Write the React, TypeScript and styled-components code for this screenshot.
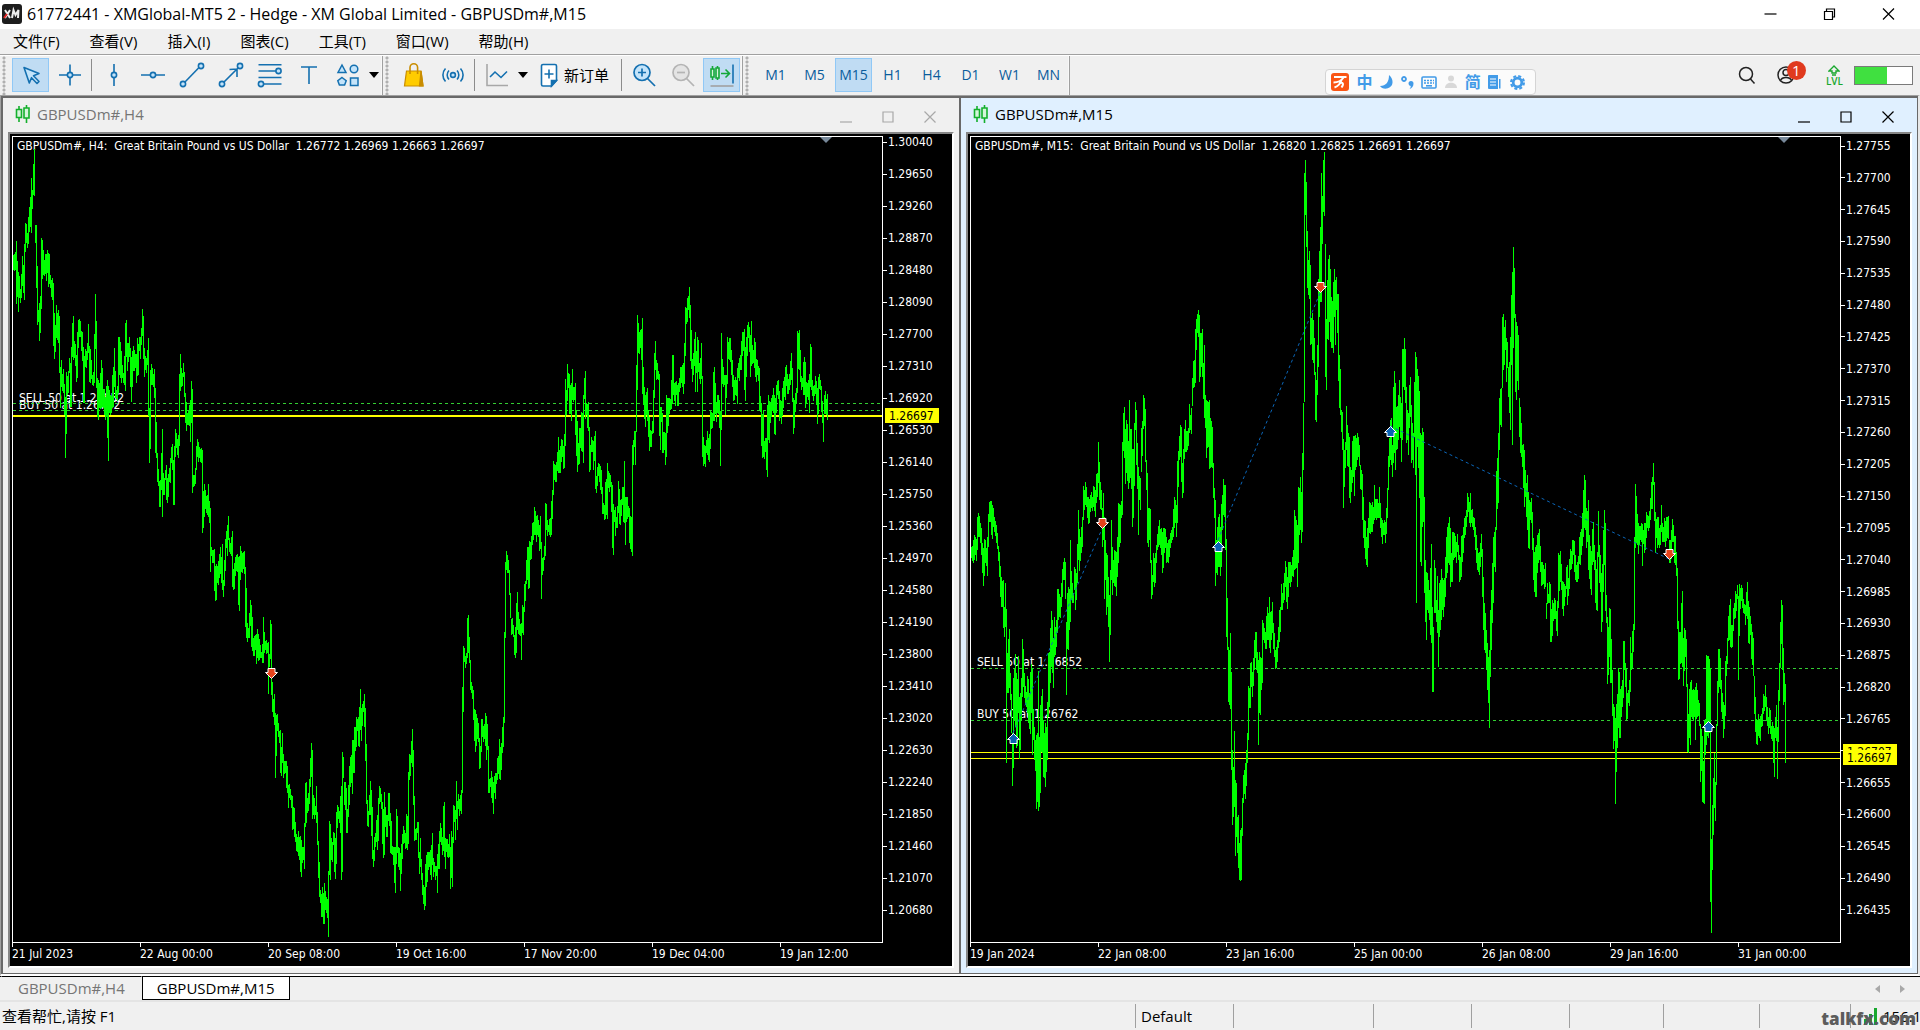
import React from "react";
import styled, { createGlobalStyle, css } from "styled-components";

const UI_FONT = `"Open Sans", "Noto Sans CJK SC", sans-serif`;
const CHART_FONT = `"DejaVu Sans Condensed", "Noto Sans", sans-serif`;

const GlobalStyle = createGlobalStyle`
  *, *::before, *::after { box-sizing: border-box; }
  body { margin: 0; background: #f0f0f0; font-family: ${UI_FONT}; font-size: 15px; color: #000; }
  button { font: inherit; color: inherit; background: none; border: 0; padding: 0; }
  ul, h1, h2 { margin: 0; padding: 0; list-style: none; font-weight: 400; font-size: inherit; }
  svg { display: block; flex: none; }
`;

/* ---------- shell ---------- */

const Shell = styled.div`
  display: flex;
  flex-direction: column;
  height: 100vh;
  min-width: 1200px;
  overflow: hidden;
  position: relative;
`;

const TitleBar = styled.header`
  display: flex;
  align-items: center;
  height: 29px;
  flex: none;
  padding: 0 8px 2px 2px;
  gap: 5px;
  background: #fff;
`;

const Caption = styled.h1`
  flex: 1;
  font-size: 16px;
  line-height: 20px;
`;

const CaptionButtons = styled.div`
  display: flex;
  gap: 12px;
`;

const CaptionButton = styled.button`
  display: grid;
  place-items: center;
  width: 47px;
  height: 24px;
`;

const MenuBar = styled.nav`
  display: flex;
  align-items: center;
  gap: 30px;
  flex: none;
  height: 27px;
  padding: 0 13px 3px;
  border-bottom: 1px solid #fff;
  box-shadow: inset 0 -1px 0 #a0a0a0;

  button { line-height: 22px; }
`;

/* ---------- toolbar ---------- */

const ToolRow = styled.div`
  display: flex;
  align-items: stretch;
  flex: none;
  height: 39px;
`;

const ToolGroup = styled.div<{ $pad?: number }>`
  display: flex;
  align-items: center;
  gap: 2px;
  padding: 0 2px 1px ${(p) => p.$pad ?? 12}px;
  border-right: 1px solid #a0a0a0;
  box-shadow: inset -1px 0 0 #f8f8f8;
  background:
    radial-gradient(circle, #b0b0b0 1px, transparent 2px) 2px 0 / 4px 4px repeat-y;
`;

const activeTool = css`
  background: #c0dcf3;
  border-color: #90c8f6;
`;

const ToolButton = styled.button<{ $active?: boolean; $wide?: boolean }>`
  display: flex;
  align-items: center;
  justify-content: center;
  gap: 6px;
  height: 34px;
  min-width: 37px;
  padding: ${(p) => (p.$wide ? "0 8px" : "0")};
  border: 1px solid transparent;
  line-height: 20px;
  ${(p) => p.$active && activeTool}
`;

const FrameButton = styled(ToolButton)`
  color: #0a5c9c;
  font-size: 14px;
`;

const DropButton = styled.button`
  display: grid;
  place-items: center;
  width: 12px;
  height: 34px;
`;

const Divider = styled.span`
  width: 1px;
  height: 32px;
  margin: 0 1px;
  background: #8c8c8c;
`;

const ToolRight = styled.div`
  display: flex;
  align-items: center;
  margin-left: auto;
  padding: 0 7px 1px 0;
  gap: 11px;
`;

const IconButton = styled.button`
  position: relative;
  display: grid;
  place-items: center;
  width: 28px;
  height: 34px;
`;

const Badge = styled.span`
  position: absolute;
  right: -6px;
  top: 3px;
  width: 19px;
  height: 19px;
  border-radius: 50%;
  background: #e03a1e;
  color: #fff;
  font-size: 15px;
  line-height: 19px;
  text-align: center;
`;

const Level = styled.div`
  display: flex;
  flex-direction: column;
  align-items: center;
  margin-left: 15px;
  color: #19a82e;
  font-size: 10px;
  line-height: 10px;
  font-weight: 600;
`;

const Battery = styled.div`
  width: 59px;
  height: 19px;
  border: 1px solid #7a7a7a;
  background: linear-gradient(90deg, #40e040 56%, #fff 56%);
`;

const ImeBar = styled.div`
  position: absolute;
  right: 384px;
  top: 69px;
  z-index: 3;
  display: flex;
  align-items: center;
  justify-content: space-between;
  width: 211px;
  height: 26px;
  padding: 0 10px 0 5px;
  border: 1px solid #d4d4d4;
  border-radius: 4px;
  background: #fbfbfb;
  color: #429be8;
  font-weight: 700;
  font-size: 16px;
  line-height: 20px;
`;

/* ---------- chart windows ---------- */

const Workspace = styled.main`
  display: flex;
  flex: 1;
  min-height: 0;
  border-top: 1px solid #a0a0a0;
  border-left: 1px solid #a0a0a0;
  border-right: 2px solid #e8e8e8;
  border-bottom: 2px solid #fff;
  padding: 1px 0 0 1px;
  background: #696969;
`;

const WindowFrame = styled.section<{ $active: boolean }>`
  display: flex;
  flex-direction: column;
  flex: 1 1 0;
  min-width: 0;
  border: 1px solid #696969;
  padding: 0 5px 5px;
  background: ${(p) => (p.$active ? "#e0f0ff" : "#f0f0f0")};
  color: ${(p) => (p.$active ? "#000" : "#757575")};
`;

const WindowBar = styled.div`
  display: flex;
  align-items: center;
  gap: 6px;
  flex: none;
  height: 34px;
  padding: 0 7px 2px;

  h2 {
    flex: 1;
    font-size: 15px;
    line-height: 20px;
  }
`;

const WindowButtons = styled.div<{ $active: boolean }>`
  display: flex;
  gap: 18px;
  padding: 5px 5px 0 0;
  color: ${(p) => (p.$active ? "#000" : "#a8a8a8")};

  button {
    display: grid;
    place-items: center;
    width: 24px;
    height: 20px;
  }
`;

const ChartArea = styled.div`
  display: grid;
  grid-template-columns: minmax(0, 1fr) 69px;
  grid-template-rows: minmax(0, 1fr) 23px;
  flex: 1;
  min-height: 0;
  padding: 2px 0 0 2px;
  border: 2px solid;
  border-color: #868686 #fff #fff #868686;
  background: #000;
  color: #fff;
  font-family: ${CHART_FONT};
  font-size: 12px;
  line-height: 12px;
`;

const Plot = styled.div`
  position: relative;
  border: 1px solid #fff;

  svg {
    position: absolute;
    inset: 0;
    width: 100%;
    height: 100%;
  }
`;

const PlotHeader = styled.p`
  margin: 2px 4px;
  line-height: 14px;
  white-space: pre;
`;

const PlotLabel = styled.span`
  position: absolute;
  left: 6px;
  transform: translateY(-100%);
  line-height: 12px;
`;

const LastTag = styled.span`
  position: absolute;
  left: calc(100% + 3px);
  width: 54px;
  height: 15px;
  margin-top: -8px;
  padding-left: 4px;
  background: #ff0;
  color: #000;
  line-height: 16px;
  z-index: 1;
`;

const PriceAxis = styled.ul<{ $inset: number }>`
  display: flex;
  flex-direction: column;
  justify-content: space-between;
  padding: ${(p) => p.$inset}px 0 27px;

  li {
    display: flex;
    align-items: center;
    gap: 1px;
    height: 12px;
  }
  li::before {
    content: "";
    width: 4px;
    height: 1px;
    background: #fff;
  }
`;

const TimeAxis = styled.ul`
  display: flex;

  li {
    position: relative;
    flex: none;
    width: 128px;
    padding-top: 5px;
  }
  li::before {
    content: "";
    position: absolute;
    left: 0;
    top: 0;
    width: 1px;
    height: 4px;
    background: #fff;
  }
`;

/* ---------- bottom ---------- */

const TabStrip = styled.div`
  display: flex;
  flex: none;
  height: 26px;
  border-top: 1px solid #000;
  border-bottom: 2px solid #e4e4e4;
  padding-left: 1px;
`;

const Tab = styled.button<{ $active?: boolean }>`
  height: 24px;
  padding: 0 ${(p) => (p.$active ? 14 : 16)}px;
  margin-top: -1px;
  line-height: 22px;
  color: ${(p) => (p.$active ? "#000" : "#757575")};
  background: ${(p) => (p.$active ? "#fff" : "#f0f0f0")};
  border: 1px solid ${(p) => (p.$active ? "#000" : "transparent")};
  border-top-color: #000;
`;

const TabArrows = styled.div`
  display: flex;
  align-items: center;
  gap: 20px;
  margin-left: auto;
  padding-right: 15px;
`;

const StatusBar = styled.footer`
  display: flex;
  align-items: center;
  flex: none;
  height: 28px;
  line-height: 20px;
`;

const StatusText = styled.span`
  flex: 1;
  padding-left: 2px;
`;

const StatusCell = styled.span<{ $w: number }>`
  display: flex;
  align-items: center;
  gap: 5px;
  width: ${(p) => p.$w}px;
  height: 24px;
  padding-left: 5px;
  border-left: 1px solid #a0a0a0;
  white-space: nowrap;
`;

const Watermark = styled.span`
  position: absolute;
  right: 4px;
  bottom: 0;
  color: #5c5c5c;
  font-family: "Open Sans", sans-serif;
  font-weight: 800;
  font-size: 17px;
  line-height: 22px;
`;

/* ---------- icons ---------- */

const BLUE = "#1470b0";
const SKY = "#c4e4fa";

type IconProps = { children: React.ReactNode; w?: number; h?: number; stroke?: string; sw?: number };

const Icon = ({ children, w = 26, h = 26, stroke = BLUE, sw = 2 }: IconProps) => (
  <svg width={w} height={h} viewBox={`0 0 ${w} ${h}`} fill="none" stroke={stroke} strokeWidth={sw} aria-hidden="true">
    {children}
  </svg>
);

const CursorIcon = () => (
  <Icon sw={1.6}><path d="M6 5.500 21 11.500 15.500 13.700 21 19.500 19 21.500 13.500 15.700 11.300 21Z" fill={SKY} strokeLinejoin="round" /></Icon>
);
const CrossIcon = () => (
  <Icon sw={1.6}><path d="M2 13h8M16 13h8M13 2.500v7.500M13 16v7.500" /><circle cx="13" cy="13" r="2.600" fill={SKY} /></Icon>
);
const VLineIcon = () => (
  <Icon sw={1.6}><path d="M13 2v8M13 16v8" /><circle cx="13" cy="13" r="2.600" fill={SKY} /></Icon>
);
const HLineIcon = () => (
  <Icon sw={1.6}><path d="M1 13h9M16 13h9" /><circle cx="13" cy="13" r="2.600" fill={SKY} /></Icon>
);
const TrendIcon = () => (
  <Icon sw={1.6}><path d="m5 21 16-16.500" /><circle cx="4" cy="22" r="2.600" fill={SKY} /><circle cx="22" cy="4" r="2.600" fill={SKY} /></Icon>
);
const RayIcon = () => (
  <Icon sw={1.6}><path d="m5 21 15-15M11.500 7.500 19 7v8" /><circle cx="4" cy="22" r="2.600" fill={SKY} /><circle cx="22" cy="4" r="2.600" fill={SKY} /></Icon>
);
const FiboIcon = () => (
  <Icon sw={1.6}>
    <path d="M1.500 2.800h23M1.500 9h17.500M1.500 15.500h23M7 22h17.500" />
    <circle cx="21.500" cy="9" r="2.600" fill={SKY} /><circle cx="4" cy="22" r="2.600" fill={SKY} />
  </Icon>
);
const TextIcon = () => (
  <Icon sw={1.6}><path d="M5 5h16M13 5v17" /></Icon>
);
const ShapesIcon = () => (
  <Icon sw={1.5}>
    <path d="M7 3 11 10.500H3Z" fill={SKY} /><circle cx="19" cy="7" r="3.800" fill={SKY} />
    <path d="M7 15.500 11.200 18.700 9.600 23H4.400L2.800 18.700Z" fill={SKY} /><path d="M15.500 16h7.500v7.500h-7.500z" fill={SKY} />
  </Icon>
);
const BagIcon = () => (
  <Icon stroke="#c98d00" sw={1.2}>
    <path d="M5.500 9h14.500l2 15H3.500Z" fill="#fc0" /><path d="M9 12V5.500a3.800 3.800 0 0 1 7.600 0V12" strokeWidth="1.600" /><path d="M20 9 22 24h-3.500Z" fill="#c98d00" />
  </Icon>
);
const SignalIcon = () => (
  <Icon sw={1.6}>
    <circle cx="13" cy="13" r="2.400" fill={SKY} />
    <path d="M9 8.500a6.500 6.500 0 0 0 0 9M17 8.500a6.500 6.500 0 0 1 0 9M5.500 6.500a9.500 9.500 0 0 0 0 13M20.500 6.500a9.500 9.500 0 0 1 0 13" />
  </Icon>
);
const LineChartIcon = () => (
  <Icon sw={1.6}><path d="M3 2v21.500h21" stroke="#a8a8a8" /><path d="m6 15 5-5 6 5.500 6-6" /></Icon>
);
const OrderIcon = () => (
  <Icon w={18} sw={1.6}>
    <path d="M3 2.500h12a1.500 1.500 0 0 1 1.500 1.500v14.500L11.500 24H3A1.500 1.500 0 0 1 1.500 22.500V4A1.500 1.500 0 0 1 3 2.500Z" fill="#fff" />
    <path d="M16.500 18.500h-5V24Z" fill={BLUE} /><path d="M9 7.500v9M4.500 12h9" />
  </Icon>
);
const ZoomInIcon = () => (
  <Icon sw={1.7}><path d="m16.500 16.500 7.500 7.500" /><circle cx="11" cy="10.500" r="8" fill={SKY} /><path d="M11 6.500v8M7 10.500h8" /></Icon>
);
const ZoomOutIcon = () => (
  <Icon stroke="#b4b4b4" sw={1.7}><path d="m16.500 16.500 7.500 7.500" /><circle cx="11" cy="10.500" r="8" fill="#e4e4e4" /><path d="M7 10.500h8" /></Icon>
);
const ShiftIcon = () => (
  <Icon stroke="#14a838" sw={1.6}>
    <path d="M3.500 4v14M8.500 4v14M12 11.500h8M16.500 7.500l4 4-4 4" /><path d="M2 7h3v8H2zM7 6h3v10H7z" fill="#d6f5dc" />
    <path d="M24 2.500v19" stroke={BLUE} /><path d="M1.500 24h23" stroke="#a0a0a0" />
  </Icon>
);
const CandleIcon = () => (
  <Icon w={16} h={18} stroke="#14b02c" sw={1.6}>
    <path d="M4 1v16M11.500 0v18" /><path d="M1.500 4.500h5v8h-5zM9 3h5v10H9z" fill="#d6f5dc" />
  </Icon>
);
const CaretIcon = () => (
  <Icon w={10} h={6} stroke="none"><path d="M0 0h10L5 6Z" fill="#000" /></Icon>
);
const SearchIcon = () => (
  <Icon w={20} h={20} stroke="#222" sw={1.5}><circle cx="9" cy="9" r="6.500" /><path d="m13.500 14 4 4.500" /></Icon>
);
const UserIcon = () => (
  <Icon w={20} h={20} stroke="#222" sw={1.5}>
    <circle cx="10" cy="10" r="8" /><circle cx="10" cy="7.500" r="3" /><path d="M4.500 15.500c1.500-4 9.500-4 11 0" />
  </Icon>
);
const LevelIcon = () => (
  <Icon w={12} h={11} stroke="#19a82e" sw={1.4}><path d="M6 1 11 6H8v2H4V6H1ZM4 10h4" /></Icon>
);

const BrandIcon = () => (
  <svg width="20" height="20" viewBox="0 0 20 20" aria-hidden="true">
    <rect width="20" height="20" rx="3" fill="#1d1d1d" />
    <path d="m3 6 5 8M8 6l-5 8M10 14l1.500-8 2 5 3-5-.5 8" stroke="#eee" strokeWidth="2" fill="none" />
    <path d="m2 14 3-4" stroke="#e02020" strokeWidth="2" />
  </svg>
);

const WinGlyph = ({ kind, size = 12 }: { kind: "min" | "max" | "restore" | "close"; size?: number }) => (
  <svg width={size} height="12" viewBox="0 0 12 12" fill="none" stroke="currentColor" strokeWidth="1.200" aria-hidden="true">
    {kind === "min" && <path d={size > 12 ? "M0 6h12" : "M0 11h12"} />}
    {kind === "max" && <path d="M1 1h10v10H1z" />}
    {kind === "restore" && <path d="M1 3.500h8v8H1zM3 3.500v-2.500h8v8H9" />}
    {kind === "close" && <path d="m.5.500 11 11M11.500.5l-11 11" />}
  </svg>
);

/* ---------- price series ----------
   Every row starts with the column of its first bar, then one high,low pair
   for each following pixel column; all values are in thirds of a pixel. */

type Block = { x: number; y: number; unit?: number; rows: string[] };

const H4_BLOCKS: Block[] = [
  { x: -13, y: -7, rows: [
    "40 375,420 372,422 365,420 333,522 393,500 426,545 438,505 477,518 432,505 378,467 405,490 342,510 279,365 282,340 308,353 261,342 231,306 201,290 144,308 180,237",
    "100 101,195 57,197 285,338 285,475 408,585 540,576 520,632 498,608 323,538 330,446 360,436 390,438 372,432 372,452 360,430 368,470 372,462 436,474 450,502 444,510",
    "160 458,648 548,686 585,665 525,625 548,630 540,638 558,730 711,835 690,770 733,782 717,790 762,855 800,984 726,912 738,795 723,790 684,730 698,830 650,832 579,682",
    "220 558,690 633,685 642,708 675,755 606,745 570,655 567,620 573,620 603,662 606,692 650,820 678,820 657,710 663,715 640,690 582,670 648,755 657,758 690,748 735,765",
    "280 726,768 612,758 492,656 573,773 744,862 750,870 760,835 729,838 690,835 714,830 777,835 777,855 800,870 768,860 750,925 768,992 780,850 795,855 798,850 735,835",
    "340 711,830 654,770 723,805 780,808 768,812 620,790 622,735 636,745 663,760 705,745 730,760 678,765 579,782 570,680 638,722 640,695 620,680 655,770 682,815 662,770",
    "400 648,722 660,722 672,715 672,760 624,738 642,735 620,662 620,686 594,645 537,618 558,686 654,740 678,720 685,728 660,705 624,858 835,998 720,957 702,765 714,765",
    "460 732,772 717,805 775,970 876,985 970,1055 1018,1068 1052,1130 1050,1130 970,1080 897,1160 1030,1095 1045,1095 1020,1050 1005,1110 1045,1118 1032,1100 1015,1055 984,1058 950,1000 942,1020",
    "520 990,1124 948,1124 897,982 909,955 928,975 915,985 732,948 672,782 714,770 728,768 699,740 727,800 790,878 815,902 850,885 844,885 826,888 810,935 753,880 777,1088",
    "580 1034,1070 1034,1068 1015,1062 948,1020 927,980 936,995 950,985 957,995 955,1000 960,1210 1083,1195 1062,1160 1080,1138 1098,1150 1095,1155 1062,1162 1113,1180",
  ] },
  { x: -13, y: 383, rows: [
    "631 -36,156 82,108 90,130 90,128 88,213 138,243 132,240 138,190 122,195 102,175 82,162 110,190 72,210 180,230 120,198 57,153 33,85 15,108 -12,60 54,95",
    "691 70,102 52,108 33,200 147,210 128,208 110,168 105,152 102,155 110,255 108,272 78,180 93,155 100,158 96,146 93,162 140,320 204,354 310,366 324,355 280,354",
    "751 240,318 255,380 291,393 354,408 348,408 345,390 342,432 327,414 342,422 357,420 375,415 395,415 372,428 291,428 336,400 363,390 360,402 368,400 366,522 402,440",
    "811 300,418 312,525 486,576 537,590 522,615 580,774 585,708 582,632 610,650 632,668 630,760 680,768 640,728 702,774 723,762 722,760 723,803 738,820 795,864 792,835",
    "871 807,840 825,864 828,930 862,926 864,950 906,966 942,993 952,996 933,1008 952,1020 948,1055 960,1072 980,1030 980,1020 910,1046 789,922 786,908 834,878 820,874 777,852",
    "931 714,800 669,772 690,897 825,885 834,896 858,884 798,908 876,975 963,1074 1026,1130 1110,1150 1122,1190 1101,1190 1118,1212 1089,1212 1112,1170 1130,1178 1137,1194 1053,1250 903,1065",
    "991 912,1080 954,1020 966,1026 936,975 938,1056 954,1077 876,1032 855,924 861,898 873,908 828,940 798,1080 696,1056 711,775 786,855 786,870 803,940 867,938 795,890 738,855",
    "1051 711,800 705,790 660,822 660,760 621,758 620,692 591,680 597,632 591,678 561,682 507,630 564,663 552,618 543,576 522,622 564,723 672,852 840,918 873,920 825,884",
    "1111 783,885 810,948 861,1018 990,1040 950,1022 938,982 900,966 885,990 834,962 798,852 804,846 822,867 846,972 867,1014 816,1005 861,920 885,950 884,950 819,902 819,918",
    "1171 880,1000 903,1003 978,1005 980,1035 981,1088 980,1118 867,1032 888,1000 982,1040 984,1050 999,1112 972,1062 942,1018 918,972 930,970 938,986 882,984 888,990 756,972 702,780",
    "1231 705,768 663,728 627,740 690,855 828,963 927,960 924,960 906,938 906,1014 996,1062 954,1040 1018,1080 1058,1125 1095,1152 1102,1170 1032,1158 1006,1100 996,1086 996,1050 996,1040",
    "1291 990,1065 975,1080 939,1035 1014,1070 1026,1055 1038,1080 1038,1068 1002,1118 972,1046 933,1046 909,965 924,975 950,1005 858,993 846,1010 954,1046 957,996 957,1012 972,1015 942,1012",
    "1351 980,1106 933,1074 952,1100 855,970 858,906 870,960 783,898 843,930 822,868 837,888 825,872 810,882 501,820 378,576 384,426 408,443 399,432 294,414 285,400 350,430",
    "1411 420,510 486,518 498,538 510,600 567,663 570,696 582,678 594,656 608,667 654,747 678,745 597,696 597,650 618,666 612,656 579,678 588,720 612,690 678,820 777,820",
    "1471 774,800 753,834 771,850 786,882 768,820 759,837 759,792 714,780 708,763 657,777",
  ] },
  { x: 427, y: 143, rows: [
    "181 1400,1500 1390,1470 1340,1420 1310,1400 1055,1330 846,1075 813,870 825,880 840,880 870,945 940,1015 1018,1066 1015,1062 1035,1070 1065,1125 1040,1133 970,1120 936,1050 996,1062 1018,1066",
    "241 1032,1068 1030,1140 975,1060 980,1064 912,995 903,962 840,912 801,900 801,926 783,924 786,840 768,838 729,796 726,780 681,766 694,765 708,786 705,765 720,770 735,812",
    "301 708,808 786,957 834,885 830,872 798,840 669,828 672,750 720,767 735,756 716,765 714,770 663,765 630,716 543,644 552,600 555,605 546,606 516,572 471,578 510,580",
    "361 498,578 477,545 480,530 498,566 462,564 297,498 330,405 252,362 279,324 282,402 315,402 309,423 267,360 321,365 320,360 309,465 390,527 423,575 489,555 444,552",
    "421 443,503 396,512 400,515 345,548 294,356 273,417 369,405 372,444 366,453 441,575 495,570 471,515 480,515 483,570 468,543 453,626 588,638 561,618 549,588 552,606",
    "481 558,630 570,642 620,702 669,702 676,720 606,718 597,705 549,717 573,624 579,635 585,621 606,696 615,804 672,825 690,725 681,768 711,744 678,743 603,700 627,732",
    "541 660,735 657,708 621,675 621,725 543,730 651,795 651,726 651,716 678,711 684,790 708,808 710,816 495,828 480,555 453,500 453,555 255,456 105,330 129,220 156,222",
    "601 150,205 147,240 114,342 261,375 321,417 345,441 336,405 324,423 390,471 410,513 450,500 453,500 423,462 330,460 219,354 183,270 240,300 249,298 273,300 282,468",
    "661 381,510 381,425 399,520 456,520 456,510 459,555 345,530 354,460 354,438 354,402 357,390 300,388 225,372 225,345 309,363 306,378 303,345 315,378 309,377 294,336",
    "721 261,324 261,310 255,320 249,342 189,312 81,228 84,132 54,126 48,90 21,114 75,243 150,267 237,306 219,285 177,258 156,336 213,280 171,336 180,276 249,297",
    "781 234,312 189,298 288,530 471,558 495,552 498,560 480,520 453,525 474,540 462,545 393,507 396,447 399,444 276,423 261,423 309,402 366,426 345,400 345,402 360,444",
    "841 393,558 159,450 237,312 261,320 285,315 285,405 285,354 171,312 186,238 174,240 174,246 210,285 240,321 285,363 300,360 291,345 300,348 264,372 249,294 234,303",
    "901 225,270 183,270 156,228 156,212 147,330 201,363 171,291 135,228 126,175 141,216 165,291 123,258 195,252 210,250 174,264 186,291 237,306 240,285 258,303 264,390",
    "961 348,396 369,498 402,534 390,530 483,537 474,515 474,570 375,591 345,480 363,489 366,430 354,410 345,394 324,400 345,462 354,465 315,400 303,345 300,356 333,423",
    "1021 360,414 363,432 324,408 303,384 291,350 261,360 255,318 282,342 297,342 282,330 243,315 219,300 264,366 354,462 360,444 339,396 324,372 153,340 159,267 150,270",
    "1081 210,306 288,330 294,321 246,345 231,345 246,384 306,372 309,351 300,360 282,399 192,321 201,330 300,348 318,363 315,348 288,342 303,375 324,432 291,402 282,327",
    "1141 300,330 318,396 363,430 402,486 345,402 333,402 357,405 342,420",
  ] },
];

const M15_BLOCKS: Block[] = [
  { x: -11, y: 303, rows: [
    "35 320,355 318,362 300,368 285,360 290,345 297,362 230,330 220,290 228,290 248,310 264,345 310,400 325,437 297,408 300,370 325,378 290,408 222,320 186,245 184,245",
    "95 184,285 195,298 203,262 232,275 243,288 255,308 280,328 318,362 336,410 378,470 410,500 422,502 420,565 500,592 430,560 508,968 640,760 596,758 568,745 700,780",
    "155 762,880 880,1038 714,984 686,840 643,862 700,925 716,918 648,820 770,958 758,930 715,840 598,770 626,742 698,775 738,796 755,800 708,818 718,850 760,868 695,882",
    "215 672,820 686,944 808,900 860,960 900,992 884,1108 880,1085 694,1112 890,1100 795,1058 768,935 747,938 840,1012 880,1015 850,1040 862,996 786,960 640,830 636,800 564,730",
    "275 514,680 540,700 595,744 532,650 560,645 540,620 448,580 448,540 462,530 470,535 430,500 386,470 366,420 354,420 366,478 545,765 460,628 442,630 446,570 300,546",
    "335 394,480 430,488 460,490 382,450 388,510 400,480 312,430 210,360 268,392 290,362 262,340 230,320 138,240 150,210 126,195 140,200 170,235 172,252 178,250 165,215",
    "395 156,205 170,212 138,200 140,212 150,230 102,190 100,170 6,130 65,180 126,208 150,210 204,322 160,300 230,476 300,420 340,526 345,500 410,560 465,665 390,586",
    "455 240,420 320,465 360,430 330,438 332,440 335,468 290,410 190,370 192,320 196,310 182,235",
    "568 205,300 208,370 360,476 405,465 340,425 355,440 338,430 315,370 282,330 258,320 240,315 268,325 265,345 275,398 264,385 265,340 268,325 290,370 310,365 300,368",
    "628 298,350 280,325 270,310 262,300 208,290 172,265 180,250 195,292 63,250 33,140 -12,60 -45,52 -40,125 68,174 27,158 -33,57 -60,36 -27,36 -27,30 -36,18",
    "688 -108,-20 -75,-30 -96,-18",
    "802 475,630 620,785 630,795 580,808 695,990 930,1155 980,1130 874,1100 1020,1248 1030,1190 1130,1240 1125,1284 1210,1320 1170,1322 1165,1320 1075,1188 1005,1090 990,1062 968,1077 930,1038",
    "862 880,970 738,900 745,805 670,805 665,740 695,770 655,738 600,690 576,655 576,690 635,700 660,914 635,820 650,825 655,750 540,730 550,600 565,610 575,628 528,628",
    "922 500,600 520,600 472,625 515,640 514,600 485,580 550,628 580,650 630,688 620,685 600,665 560,625 510,605 500,575 432,510 460,510 430,490 400,480 364,440 380,485",
    "982 412,506 366,470 366,430 366,440 374,425 350,408 330,410 210,390 228,388 240,385 255,440 140,370 145,285 110,270 155,310",
    "1396 360,545 395,600 400,510 420,520 450,540 385,585 312,610 500,755 560,755 360,520 385,520 480,545 408,580 510,680",
  ] },
  { x: 129, y: 243, rows: [
    "68 186,405 99,214 81,234 147,311 121,278 132,303 183,327 60,308 147,293 147,327 207,442 207,415 129,318 66,150 90,254 189,328 260,464 288,360 294,390 144,275",
    "128 123,228 45,148 54,138 87,245 240,330 279,490 385,500",
  ] },
  { x: 209, y: -7, rows: [
    "37 745,828 692,775 690,770 598,760 567,660 552,610 540,620 556,755 608,740 608,710 598,740 700,808 645,865 795,895 810,985 812,955 815,950 810,1018 865,1015 872,1012",
    "97 890,1015 1000,1105 1075,1165 1110,1368 1230,1330 1190,1335 1160,1310 1152,1310 1190,1338 1122,1310 1095,1200 1047,1155 1066,1160 1066,1260 1228,1520",
    "367 970,1205 820,1020 130,815 90,255 155,350 304,475 390,495 363,508 405,645 565,642 550,690 570,700 625,735 725,870 750,875 645,795 448,712 363,560 292,515 130,515",
    "427 198,342 90,245 67,258 342,740 567,780 450,628 387,630 375,575 417,635 500,653 514,655 455,670 417,560 450,645 440,540 492,610 492,752 675,835 718,855 840,905",
    "487 845,960 928,1133 960,1070 935,1015 828,960 885,1008 908,1010 922,1105 1010,1120 1020,1085 932,1058 918,1040 918,1098 915,1020 925,1010 908,990 920,980 945,1008 1005,1078 1020,1080",
    "547 1033,1170 1100,1225 1170,1255 1172,1288 1222,1305 1195,1310 1165,1255 1115,1210 1118,1212 1125,1205 1115,1205 1130,1182 1065,1170 1108,1165 1108,1170 1108,1165 1118,1165 1070,1165 1120,1195 1165,1220",
    "607 1170,1242 1180,1215 1170,1215 1175,1238 1135,1212 1075,1165 978,1080 925,1010 870,990 863,1005 945,1040 770,1000 723,970 760,1020 830,960 828,958 795,930 750,890 800,925 820,995",
    "667 658,930 658,770 625,780 658,820 770,940 840,930 850,975 765,895 740,860 825,1000 880,990 910,1015 755,920 667,1035 680,1420 717,950 738,1015 783,1105 910,1295 915,1308",
    "727 895,1190 905,1175 1100,1390",
    "778 1360,1520 1350,1500 1318,1470 1345,1440 1350,1460 1345,1430 1280,1400 1222,1345 1192,1330 1178,1300 1160,1305 1195,1370 1268,1355 1205,1355 1205,1290 1208,1285 1218,1280 1235,1300 1212,1265 1245,1290",
    "838 1275,1355 1280,1350 1217,1340 1215,1295 1190,1270 1165,1225 1158,1215 1140,1190 1090,1160 1100,1145 1115,1180 1090,1190 1140,1180 1138,1190 1160,1200 1165,1220 1190,1260 1215,1300 1255,1320 1270,1325",
    "898 1265,1335 1240,1310 1212,1280 1258,1400 1340,1500 1420,1560 1450,1570 1500,1620 1540,1680 1580,1720 1560,1794 1440,1640 1380,1560 1300,1480 1220,1420 1205,1310 1190,1325 1022,1200 985,1138 908,1120",
    "958 805,960 778,885 774,890 560,775 552,720 592,705 570,660 625,755 635,715 712,800 695,850 622,900 495,705 425,945 350,655 415,565 552,785 575,810 588,752 615,780",
    "1018 805,920 830,968 880,980 945,1010 942,1075 960,1130 1020,1100 1060,1160 1035,1200 1085,1255 1110,1258 1115,1170 1105,1180 1145,1260 1225,1350 1265,1385 1250,1400 1245,1400 1215,1330 1210,1300",
    "1078 1198,1290",
  ] },
  { x: 569, y: 283, unit: 2.958, rows: [
    "2 372,450 420,490 420,488 428,485 440,500 424,495 540,588 482,545 515,540 480,540 486,656 558,656 532,640 540,596 528,588 532,590 565,625 536,638 392,555 398,505",
    "62 388,480 426,504 476,560 480,580 484,550 490,525 436,500 428,546 466,522 410,500 382,445 388,440 356,425 354,400 358,450 400,474 428,478 420,478 402,470 346,425",
    "122 332,428 322,400 275,372 207,345 163,320 178,325 260,380 268,360 237,445 340,470 372,500 388,518 322,430 302,420 370,445 415,540 442,562 390,564 269,405 370,482",
    "182 400,510 452,626 425,598 325,510 266,430 305,565 518,600 582,780 612,755 556,700 560,778 648,778 740,875 840,972 850,950 882,1135 840,1040 810,970 735,912 745,940",
    "242 795,942 786,880 768,850 654,822 654,740 718,790 736,888 808,885 800,838 768,845 642,806 690,740 624,735 604,685 345,622 190,378 225,365 278,370 306,395 315,370",
    "302 315,355 305,362 308,432 325,368 305,392 305,385 272,350 282,320 284,328 270,320 230,296 182,264 168,262 127,192 182,300 272,392 292,348 286,378 288,370 318,378",
    "362 312,370 250,330 305,360 316,362 290,362 300,375 288,358 286,350 284,352 355,422 355,422 326,412 294,360 312,362 342,422 344,430 390,462 438,618 596,768 628,766",
    "422 626,722 542,720 506,732 645,786 615,742 620,700 648,790 782,982 870,985 795,940 774,962 770,880 798,885 795,890 800,878 790,948 778,885 800,880 828,875 838,905",
    "482 900,1072 915,1038 935,1130 1010,1134 890,1136 884,990 695,960 698,935 697,940 706,925 735,1425 1240,1518 1140,1330 1058,1228 984,1148 1070,1186 900,1080 772,905 678,808 678,790",
    "542 705,795 770,865 808,885 835,942 842,915 712,875 698,758 645,722 580,655 546,650 530,670 605,675 606,672 555,625 540,588 506,585 516,565 488,530 522,768 485,638",
    "602 496,560 488,535 496,555 530,570 545,575 548,605 508,580 480,588 535,660 552,662 580,635 602,708 628,725 645,756 756,870 820,922 885,958 888,962 870,935 885,940",
    "662 876,950 870,908 852,905 811,870 815,862 785,848 820,890 850,905 880,930 852,912 858,930 905,945 892,950 905,1015 910,1056 880,940 843,950 908,1062 800,952 720,830",
    "722 598,735 533,662 546,740 675,842 748,835 780,1015",
  ] },
];

const barPath = (blocks: Block[]) =>
  blocks
    .flatMap(({ x, y, unit = 3, rows }) =>
      rows.flatMap((row) => {
        const [start, ...bars] = row.split(" ");
        const first = x + Math.floor(Number(start) / 3);
        return bars.map((bar, i) => {
          const [hi, lo] = bar.split(",").map((v) => Math.round(y + Number(v) / unit));
          return `M${first + i + 0.5} ${hi}V${lo}`;
        });
      }),
    )
    .join("");

/* ---------- charts ---------- */

const PLOT_W = 869;
const PLOT_H = 805;

type Chart = {
  name: string;
  active: boolean;
  header: string;
  top: number;
  step: number;
  inset: number;
  firstTick: number;
  tickGap: number;
  times: string[];
  levels: { label: string; price: number }[];
  tags: number[];
  blocks: Block[];
  lineWidth: number;
  deals: { x: number; y: number; side: "buy" | "sell" }[];
  links: [number, number, number, number][];
  shiftX: number;
};

const LEVELS = [
  { label: "SELL 50 at 1.26852", price: 1.26852 },
  { label: "BUY 50 at 1.26762", price: 1.26762 },
];

const CHARTS: Chart[] = [
  {
    name: "GBPUSDm#,H4",
    active: false,
    header: "GBPUSDm#, H4:  Great Britain Pound vs US Dollar  1.26772 1.26969 1.26663 1.26697",
    top: 1.3004, step: 0.0039, inset: 0, firstTick: 5, tickGap: 32,
    times: ["21 Jul 2023", "22 Aug 00:00", "20 Sep 08:00", "19 Oct 16:00", "17 Nov 20:00", "19 Dec 04:00", "19 Jan 12:00"],
    levels: LEVELS,
    tags: [1.26697],
    blocks: H4_BLOCKS,
    lineWidth: 2,
    deals: [{ x: 258, y: 536, side: "sell" }],
    links: [],
    shiftX: 813,
  },
  {
    name: "GBPUSDm#,M15",
    active: true,
    header: "GBPUSDm#, M15:  Great Britain Pound vs US Dollar  1.26820 1.26825 1.26691 1.26697",
    top: 1.27755, step: 0.00055, inset: 4, firstTick: 9, tickGap: 31.8,
    times: ["19 Jan 2024", "22 Jan 08:00", "23 Jan 16:00", "25 Jan 00:00", "26 Jan 08:00", "29 Jan 16:00", "31 Jan 00:00"],
    levels: LEVELS,
    tags: [1.26707, 1.26697],
    blocks: M15_BLOCKS,
    lineWidth: 1,
    deals: [
      { x: 42, y: 602, side: "buy" },
      { x: 131, y: 386, side: "sell" },
      { x: 247, y: 410, side: "buy" },
      { x: 349, y: 150, side: "sell" },
      { x: 419, y: 295, side: "buy" },
      { x: 698, y: 417, side: "sell" },
      { x: 737, y: 590, side: "buy" },
    ],
    links: [[42, 596, 131, 392], [247, 403, 349, 156], [419, 289, 698, 422]],
    shiftX: 813,
  },
];

const ChartWindow = ({ chart }: { chart: Chart }) => {
  const { active, levels, tags, lineWidth } = chart;
  const yOf = (price: number) => chart.firstTick + ((chart.top - price) / chart.step) * chart.tickGap;
  const pct = (price: number) => `${(yOf(price) / PLOT_H) * 100}%`;
  const prices = Array.from({ length: 25 }, (_, i) => (chart.top - i * chart.step).toFixed(5));

  return (
    <WindowFrame $active={active}>
      <WindowBar>
        <CandleIcon />
        <h2>{chart.name}</h2>
        <WindowButtons $active={active}>
          <button aria-label="Minimize"><WinGlyph kind="min" /></button>
          <button aria-label="Maximize"><WinGlyph kind="max" /></button>
          <button aria-label="Close"><WinGlyph kind="close" /></button>
        </WindowButtons>
      </WindowBar>
      <ChartArea>
        <Plot>
          <PlotHeader>{chart.header}</PlotHeader>
          {levels.map((l) => (
            <PlotLabel key={l.label} style={{ top: pct(l.price) }}>{l.label}</PlotLabel>
          ))}
          <svg viewBox={`0 0 ${PLOT_W} ${PLOT_H}`} preserveAspectRatio="none" fill="none" role="img" aria-label={chart.name}>
            {levels.map((l) => (
              <path key={l.label} d={`M0 ${Math.floor(yOf(l.price)) + 0.5}H${PLOT_W}`} stroke="#32cd32" strokeDasharray="3 3" shapeRendering="crispEdges" />
            ))}
            {tags.map((t) => (
              <path key={t} d={`M0 ${Math.round(yOf(t)) + (lineWidth === 1 ? 0.5 : 0)}H${PLOT_W}`} stroke="#ff0" strokeWidth={lineWidth} shapeRendering="crispEdges" />
            ))}
            <path d={barPath(chart.blocks)} stroke="#0f0" shapeRendering="crispEdges" />
            {chart.links.map(([x1, y1, x2, y2]) => (
              <path key={x1} d={`M${x1} ${y1}L${x2} ${y2}`} stroke="#0b66b8" strokeDasharray="3 3" />
            ))}
            {chart.deals.map((d) => (
              <path
                key={d.x}
                d={d.side === "buy" ? "M0-5.500 6 .5H3.500V4.500H-3.500V.5H-6Z" : "M0 5.500 6-.5H3.500V-4.500H-3.500V-.5H-6Z"}
                transform={`translate(${d.x + 0.5} ${d.y})`}
                fill={d.side === "buy" ? "#0b62b4" : "#e6431c"}
                stroke="#fff"
              />
            ))}
            <path d={`M${chart.shiftX - 6} 0h12l-6 6Z`} fill="#778899" />
          </svg>
          {tags.map((t) => (
            <LastTag key={t} style={{ top: pct(t) }}>{t.toFixed(5)}</LastTag>
          ))}
        </Plot>
        <PriceAxis $inset={chart.inset}>
          {prices.map((p) => <li key={p}>{p}</li>)}
        </PriceAxis>
        <TimeAxis>
          {chart.times.map((t) => <li key={t}>{t}</li>)}
        </TimeAxis>
      </ChartArea>
    </WindowFrame>
  );
};

/* ---------- page ---------- */

const MENUS = ["文件(F)", "查看(V)", "插入(I)", "图表(C)", "工具(T)", "窗口(W)", "帮助(H)"];
const FRAMES = ["M1", "M5", "M15", "H1", "H4", "D1", "W1", "MN"];
const DRAW_TOOLS: [string, () => React.ReactElement][] = [
  ["Vertical line", VLineIcon],
  ["Horizontal line", HLineIcon],
  ["Trend line", TrendIcon],
  ["Arrowed line", RayIcon],
  ["Fibonacci", FiboIcon],
  ["Text", TextIcon],
  ["Shapes", ShapesIcon],
];

const ImePanel = () => (
  <ImeBar>
    <svg width="18" height="18" viewBox="0 0 18 18" fill="none" stroke="#fff" strokeWidth="2">
      <rect width="18" height="18" rx="3" fill="#fa5514" stroke="none" />
      <path d="M3 4h12.500M2.500 9.500c4 0 8-2 10-5M3.500 14.500c4-1.500 6-4 7-7.500M8.500 10.500c3-1.500 5-.5 2 4" />
    </svg>
    <span>中</span>
    <svg width="13" height="14" viewBox="0 0 13 14"><path d="M9 0c5 4 5 12-2 13.500C4 14 1 13 0 11c6 0 9-4 9-11Z" fill="#429be8" /></svg>
    <svg width="13" height="14" viewBox="0 0 13 14"><circle cx="3" cy="4" r="2" fill="none" stroke="#429be8" strokeWidth="1.800" /><path d="M7.500 8.500a2.500 2.500 0 1 1 5 0c0 3-1.500 4.500-4 5.500 1-1.200 1.300-2 1.200-3a2.500 2.500 0 0 1-2.200-2.500Z" fill="#429be8" /></svg>
    <svg width="16" height="13" viewBox="0 0 16 13" fill="none" stroke="#429be8" strokeWidth="1.600"><rect x="1" y="1" width="14" height="11" rx="1" /><path d="M3 4.500h10M3 7h10" strokeDasharray="2 1" /><path d="M5 9.800h6" /></svg>
    <svg width="12" height="14" viewBox="0 0 12 14" fill="#d8d8d8"><circle cx="6" cy="3.500" r="3" /><path d="M0 13c0-7 12-7 12 0Z" /></svg>
    <span>简</span>
    <svg width="14" height="14" viewBox="0 0 14 14"><path d="M1 0h9v14H1a1 1 0 0 1-1-1V1a1 1 0 0 1 1-1ZM11 4h1.500v9.500H11Z" fill="#429be8" /><path d="M2 4h6M2 7h6M2 10h6" stroke="#fff" /></svg>
    <svg width="15" height="15" viewBox="0 0 15 15" fill="none" stroke="#429be8"><circle cx="7.500" cy="7.500" r="6.500" strokeWidth="2" strokeDasharray="3 2.100" /><circle cx="7.500" cy="7.500" r="4.300" strokeWidth="2.800" /></svg>
  </ImeBar>
);

export default function App() {
  return (
    <Shell>
      <GlobalStyle />
      <TitleBar>
        <BrandIcon />
        <Caption>61772441 - XMGlobal-MT5 2 - Hedge - XM Global Limited - GBPUSDm#,M15</Caption>
        <CaptionButtons>
          <CaptionButton aria-label="Minimize"><WinGlyph kind="min" size={13} /></CaptionButton>
          <CaptionButton aria-label="Restore"><WinGlyph kind="restore" size={13} /></CaptionButton>
          <CaptionButton aria-label="Close"><WinGlyph kind="close" size={13} /></CaptionButton>
        </CaptionButtons>
      </TitleBar>
      <MenuBar>
        {MENUS.map((m) => <button key={m}>{m}</button>)}
      </MenuBar>

      <ToolRow>
        <ToolGroup>
          <ToolButton $active aria-label="Cursor"><CursorIcon /></ToolButton>
          <ToolButton aria-label="Crosshair"><CrossIcon /></ToolButton>
          <Divider />
          {DRAW_TOOLS.map(([label, Glyph]) => (
            <ToolButton key={label} aria-label={label}><Glyph /></ToolButton>
          ))}
          <DropButton aria-label="More shapes"><CaretIcon /></DropButton>
        </ToolGroup>
        <ToolGroup>
          <ToolButton aria-label="Market"><BagIcon /></ToolButton>
          <ToolButton aria-label="Signals"><SignalIcon /></ToolButton>
          <Divider />
          <ToolButton aria-label="Chart type"><LineChartIcon /></ToolButton>
          <DropButton aria-label="More chart types"><CaretIcon /></DropButton>
          <ToolButton $wide><OrderIcon />新订单</ToolButton>
          <Divider />
          <ToolButton aria-label="Zoom in"><ZoomInIcon /></ToolButton>
          <ToolButton aria-label="Zoom out"><ZoomOutIcon /></ToolButton>
          <ToolButton $active aria-label="Chart shift"><ShiftIcon /></ToolButton>
        </ToolGroup>
        <ToolGroup $pad={14}>
          {FRAMES.map((f) => <FrameButton key={f} $active={f === "M15"}>{f}</FrameButton>)}
        </ToolGroup>
        <ToolRight>
          <IconButton aria-label="Search"><SearchIcon /></IconButton>
          <IconButton aria-label="Account"><UserIcon /><Badge>1</Badge></IconButton>
          <Level><LevelIcon />LVL</Level>
          <Battery />
        </ToolRight>
      </ToolRow>
      <ImePanel />

      <Workspace>
        {CHARTS.map((c) => <ChartWindow key={c.name} chart={c} />)}
      </Workspace>

      <TabStrip>
        {CHARTS.map((c) => <Tab key={c.name} $active={c.active}>{c.name}</Tab>)}
        <TabArrows>
          <svg width="5" height="8" viewBox="0 0 5 8"><path d="M5 0v8L0 4Z" fill="#a8a8a8" /></svg>
          <svg width="5" height="8" viewBox="0 0 5 8"><path d="M0 0v8l5-4Z" fill="#a8a8a8" /></svg>
        </TabArrows>
      </TabStrip>
      <StatusBar>
        <StatusText>查看帮忙,请按 F1</StatusText>
        <StatusCell $w={98}>Default</StatusCell>
        <StatusCell $w={140} />
        <StatusCell $w={98} />
        <StatusCell $w={98} />
        <StatusCell $w={94} />
        <StatusCell $w={96} />
        <StatusCell $w={91} />
        <StatusCell $w={70}>
          <svg width="22" height="18" viewBox="0 0 22 18" stroke="#19a82e" strokeWidth="3"><path d="M9.500 18v-6M14.500 18V7M19.500 18V1" /></svg>
          156.1
        </StatusCell>
      </StatusBar>
      <Watermark>talkfx.com</Watermark>
    </Shell>
  );
}
